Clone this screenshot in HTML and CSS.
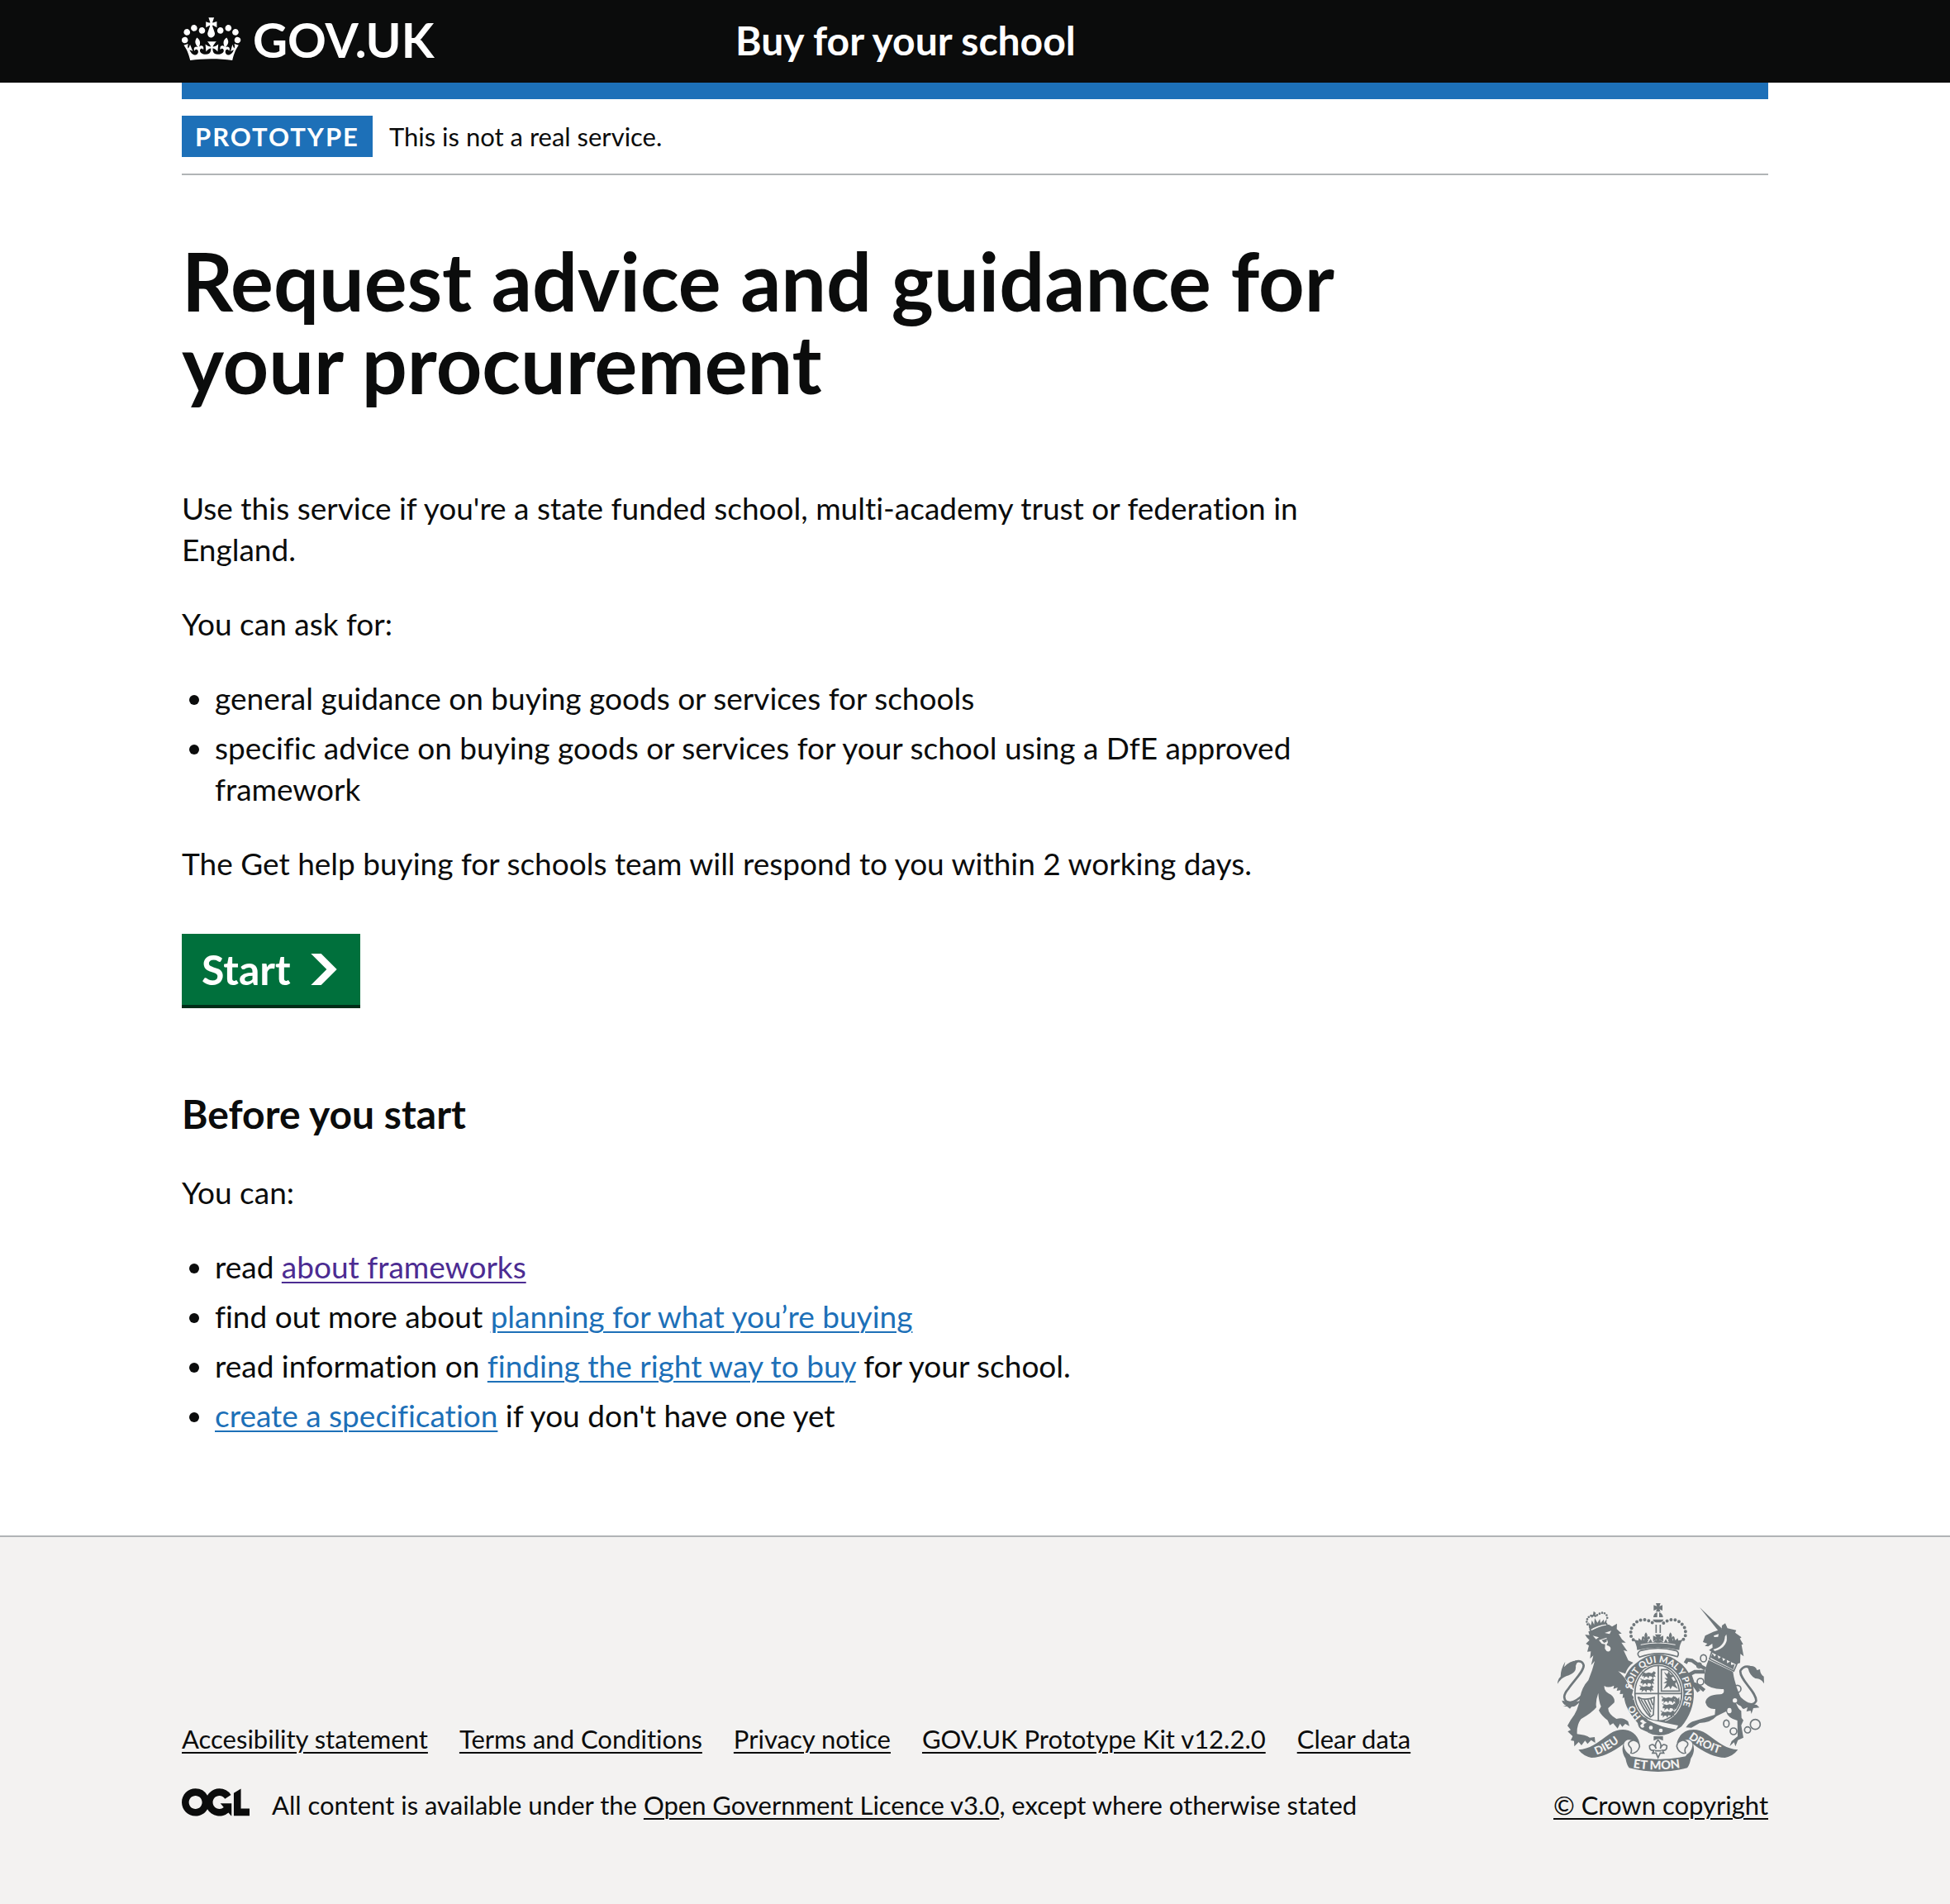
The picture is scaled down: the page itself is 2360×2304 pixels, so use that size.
FILE: index.html
```html
<!DOCTYPE html>
<html lang="en">
<head>
<meta charset="utf-8">
<meta name="viewport" content="width=device-width, initial-scale=1">
<title>Request advice and guidance for your procurement - Buy for your school</title>
<link rel="stylesheet" href="styles.css">
</head>
<body>
<header class="header">
  <div class="container header-row">
    <a class="logo" href="#">
      <svg class="logo-crown" viewBox="0 4 36 27" aria-hidden="true"><path fill="currentColor" d="M6.7 12.2c1 .4 2.1-.1 2.5-1s-.1-2.1-1-2.5c-1-.4-2.1.1-2.5 1-.4 1 0 2.1 1 2.5m-4.3 2.5c1 .4 2.1-.1 2.5-1s-.1-2.1-1-2.5c-1-.4-2.1.1-2.5 1-.5 1 0 2.1 1 2.5m-1.3 4.8c1 .4 2.1-.1 2.5-1 .4-1-.1-2.1-1-2.5-1-.4-2.1.1-2.5 1-.4 1 0 2.1 1 2.5m10.4-5.8c1 .4 2.1-.1 2.5-1s-.1-2.1-1-2.5c-1-.4-2.1.1-2.5 1s0 2.1 1 2.5m17.4-1.5c-1 .4-2.1-.1-2.5-1s.1-2.1 1-2.5c1-.4 2.1.1 2.5 1 .5 1 0 2.1-1 2.5m4.3 2.5c-1 .4-2.1-.1-2.5-1s.1-2.1 1-2.5c1-.4 2.1.1 2.5 1 .5 1 0 2.1-1 2.5m1.3 4.8c-1 .4-2.1-.1-2.5-1-.4-1 .1-2.1 1-2.5 1-.4 2.1.1 2.5 1 .4 1 0 2.1-1 2.5m-10.4-5.8c-1 .4-2.1-.1-2.5-1s.1-2.1 1-2.5c1-.4 2.1.1 2.5 1s0 2.1-1 2.5m-5.3-4.9 2.4 1.3V6.5l-2.4.8c-.1-.1-.1-.2-.2-.2s1-3 1-3h-3.4l1 3c-.1.1-.2.1-.2.2-.1.1-2.4-.7-2.4-.7v3.5L17 8.8c-.1.1 0 .2.1.3l-1.4 4.2c-.1.2-.1.4-.1.7 0 1.1.8 2.1 1.9 2.2h.6C19.2 16 20 15.1 20 14c0-.2 0-.4-.1-.7l-1.4-4.2c.2-.1.3-.2.3-.3m-1 20.3c4.6 0 8.9.3 12.8.9 1.1-4.6 2.4-7.2 3.8-9.1l-2.6-.9c.3 1.3.3 1.9 0 2.8-.4-.4-.8-1.2-1.1-2.4l-1.2 4.2c.8-.5 1.4-.9 2-.9-1.2 2.6-2.7 3.2-3.6 3-1.2-.2-1.7-1.3-1.5-2.2.3-1.3 1.6-1.6 2.2-.1 1.2-2.4-.8-3.1-2.1-2.4 1.9-1.9 2.2-3.6.6-5.7-2.2 1.7-2.2 3.3-1.2 5.6-1.3-1.5-3.3-.7-2.5 1.7.9-1.4 2.1-.5 2 .8-.2 1.2-1.7 2.1-3.7 2-2.8-.2-3-2.2-3-3.7.7-.1 1.9.5 3 2l.4-4.4c-1.1 1.1-2.2 1.4-3.3 1.4.4-1.2 2.1-3.1 2.1-3.1h-5.4s1.7 1.9 2.1 3.1c-1.1 0-2.2-.3-3.3-1.4l.4 4.4c1.1-1.5 2.3-2.1 3-2-.1 1.6-.2 3.5-3 3.7-1.9.2-3.5-.8-3.7-2-.2-1.3 1.1-2.2 2-.8.7-2.4-1.3-3.1-2.6-1.7 1-2.3 1-4-1.2-5.6-1.6 2.1-1.3 3.8.6 5.7-1.3-.7-3.2 0-2.1 2.4.6-1.5 1.9-1.1 2.2.1.2.9-.4 1.9-1.5 2.2-1 .2-2.5-.5-3.7-3 .7 0 1.3.4 2 .9L5 20.4c-.3 1.2-.7 1.9-1.2 2.4-.3-.8-.2-1.5 0-2.8l-2.6.9C2.7 22.8 4 25.4 5.1 30c3.8-.5 8.2-.9 12.7-.9"/></svg>
      <span>GOV.UK</span>
    </a>
    <a class="service-name" href="#">Buy for your school</a>
  </div>
</header>

<div class="container content">
  <div class="phase-banner">
    <strong class="tag">PROTOTYPE</strong>
    <span>This is not a real service.</span>
  </div>

  <main class="main">
    <h1>Request advice and guidance for your procurement</h1>
    <p>Use this service if you're a state funded school, multi-academy trust or federation in England.</p>
    <p>You can ask for:</p>
    <ul class="bullets">
      <li>general guidance on buying goods or services for schools</li>
      <li>specific advice on buying goods or services for your school using a DfE approved framework</li>
    </ul>
    <p>The Get help buying for schools team will respond to you within 2 working days.</p>
    <button class="start" type="button">Start
      <svg class="start-icon" viewBox="0 0 33 40" aria-hidden="true"><path fill="currentColor" d="M0 0h13l20 20-20 20H0l20-20z"/></svg>
    </button>
    <h2>Before you start</h2>
    <p>You can:</p>
    <ul class="bullets">
      <li>read <a class="visited" href="#">about frameworks</a></li>
      <li>find out more about <a href="#">planning for what you’re buying</a></li>
      <li>read information on <a href="#">finding the right way to buy</a> for your school.</li>
      <li><a href="#">create a specification</a> if you don't have one yet</li>
    </ul>
  </main>
</div>

<footer class="footer">
  <div class="container footer-row">
    <div class="footer-main">
      <ul class="footer-links">
        <li><a href="#">Accesibility statement</a></li>
        <li><a href="#">Terms and Conditions</a></li>
        <li><a href="#">Privacy notice</a></li>
        <li><a href="#">GOV.UK Prototype Kit v12.2.0</a></li>
        <li><a href="#">Clear data</a></li>
      </ul>
      <div class="licence">
        <svg class="ogl" viewBox="0 0 483 196" aria-hidden="true"><path fill="currentColor" d="M421.5 142.8V.1l-50.7 32.3v161.1h112.4v-50.7zm-122.3-9.6A47.12 47.12 0 0 1 221 97.8c0-26 21.1-47.1 47.1-47.1 16.7 0 31.4 8.7 39.7 21.8l42.7-27.2A97.63 97.63 0 0 0 268.1 0c-36.5 0-68.3 20.1-85.1 49.7A98 98 0 0 0 97.8 0C43.9 0 0 43.9 0 97.8s43.9 97.8 97.8 97.8c36.5 0 68.3-20.1 85.1-49.7a97.76 97.76 0 0 0 149.6 25.4l19.4 22.2h3v-87.8h-80l24.3 27.5zM97.8 145c-26 0-47.1-21.1-47.1-47.1s21.1-47.1 47.1-47.1 47.1 21.1 47.1 47.1S123.8 145 97.8 145"/></svg>
        <span>All content is available under the <a href="#">Open Government Licence v3.0</a>, except where otherwise stated</span>
      </div>
    </div>
    <a class="copyright" href="#">
      <svg class="arms" viewBox="72 60 750 612" aria-hidden="true">
        <defs>
          <path id="belt" d="M376 472A97 111 0 1 1 486 483"/>
          <path id="ribbon-left" d="M214 611Q268 590 318 546"/>
          <path id="ribbon-right" d="M547 550Q604 592 682 612"/>
          <path id="ribbon-mid" d="M346 657Q437 672 532 655"/>
          <g id="fleur"><path d="M0-16Q-9-5-3 4Q-12-8-15 4Q-13 12-7 8L-9 16H9L7 8Q13 12 15 4Q12-8 3 4Q9-5 0-16Z"/></g>
          <g id="lion-passant"><path d="M-26 2l6-9 8 3 10-3 11 3 8-7 7 6-5 7 5 8-8-2-2 8-5-8-9-1-3 9-5-8-6 1-6 7 1-9-7 1zM-24-4l-5-7 8 3z"/></g>
        </defs>
        <!-- lion -->
        <path d="M178 184L172 174L188 176L184 163L258 137L270 145L288 134L287 154L305 170L294 172L306 191L320 203L304 203L326 235L312 231L329 268L347 276Q326 291 318 316L292 307Q327 337 330 364L347 376L342 393L350 403L339 417L332 405L323 416L316 402L308 404L310 389L298 390L301 376L287 378L290 366L275 371L277 359Q255 370 242 360Q239 381 266 392Q282 405 278 421L256 441Q255 461 286 480Q310 472 328 489L333 506L318 498L307 509L299 497L290 515L274 496L262 503L254 485Q231 468 222 449L230 435Q222 417 220 386Q209 417 213 438Q199 456 157 481Q141 503 143 535Q174 538 189 548L207 546L209 567L194 557L181 571L172 559L159 576L149 564L133 580L132 560L120 558L127 543L109 526L120 520L108 505L120 484Q148 449 153 404Q161 364 184 340Q199 304 207 270L194 285L202 250L190 261L193 235L180 236L186 214L175 207L188 194Z"/>
        <path class="line-thick" d="M168 389Q128 431 103 416Q87 399 111 371C132 340 168 307 167 286Q163 265 136 272"/>
        <path d="M150 269Q119 265 96 292L100 272Q83 299 83 327Q73 334 72 353Q87 328 113 322Q142 311 138 288Q141 276 150 269ZM88 413Q91 427 104 431L92 435L107 435L117 443L123 436Q139 437 156 414L120 420Z"/>
        <path class="paper" d="M200 178L222 184L212 191ZM243 168L267 160L261 172ZM222 194L250 185L255 202L250 212Q269 216 264 231Q253 243 244 225L245 209L233 207Z"/>
        <path d="M232 194L252 188L250 200L241 204Z"/>
        <!-- lion's crown -->
        <path class="line" d="M190 155Q215 137 250 134L253 142Q219 147 195 164Z"/>
        <path d="M186 149L184 128L193 141L197 122L205 138L207 114L217 131L226 117L228 132L240 119L241 131L251 116L249 134Q215 137 190 155Z"/>
        <path d="M203 89l8 6-2 8 8 1-7 7-7-4-6 6-4-9 8-3z"/>
        <g class="dots"><path d="M181 137L177 124L183 112L192 105L203 108M216 103L228 96L240 94L250 103L253 115"/></g>
        <!-- unicorn -->
        <path d="M588 75L670 153L657 162Z"/>
        <path d="M600 201L608 178L637 164L668 154L669 141L681 133L689 151L721 158L717 167L740 184L734 188L746 209L740 211L748 253L736 244L735 277L721 281L632 237L622 230L635 221L634 207L619 217L607 215L616 207Z"/>
        <path class="paper" d="M639 178L657 172L655 182L641 183ZM685 173Q696 217 643 234L637 228Q678 218 680 181Z"/>
        <path class="paper line" d="M632 236L723 281L712 306L624 263Z"/>
        <path d="M628 258L635 242L642 254L651 243L657 262L669 252L673 270L686 261L688 278L702 269L702 284L715 282L710 301Z"/>
        <path d="M620 266L709 309Q715 352 734 395Q749 426 773 437L756 437Q736 437 720 422Q727 443 739 451L740 476L747 485L739 503L747 548L727 557L718 580L713 565L697 579L704 561L726 543L725 486Q691 478 684 453L649 470Q629 493 588 495L558 512L538 511Q550 491 572 487L643 465L645 444Q617 447 609 420Q613 392 662 391Q680 390 675 372Q630 374 606 351Q601 309 620 266Z"/>
        <path class="line-leg" d="M609 298L577 280L560 268L543 266L536 278M606 309L570 309L552 318L563 350L588 363L605 377M566 354L585 380"/>
        <path class="line-thick" d="M735 405Q778 443 793 415C796 382 731 337 736 305Q749 283 776 293"/>
        <path d="M755 291Q790 281 796 303L807 300Q808 319 821 326L822 352Q812 333 790 333Q770 323 764 297ZM735 418Q737 442 748 444L762 438L758 453L773 450L776 462L783 441L805 439L795 429Z"/>
        <g class="chain"><ellipse cx="602" cy="260" rx="11" ry="13"/><ellipse cx="586" cy="286" rx="8" ry="9"/><circle cx="591" cy="345" r="12"/><circle cx="725" cy="371" r="13"/><ellipse cx="685" cy="497" rx="10" ry="13"/><circle cx="711" cy="525" r="12"/><circle cx="762" cy="520" r="11"/><circle cx="790" cy="500" r="18"/></g>
        <circle class="paper" cx="716" cy="413" r="8"/><ellipse class="paper" cx="696" cy="450" rx="8" ry="10"/>
        <!-- garter and shield -->
        <path d="M353 281Q437 208 525 283Q567 326 567 387Q567 453 522 508Q430 575 370 503Q316 444 314 400L349 410L348 371L316 330Q330 298 353 281Z"/>
        <ellipse class="paper" cx="438" cy="387" rx="91" ry="106"/>
        <ellipse class="line" cx="438" cy="387" rx="85" ry="101"/>
        <path class="line-cross" d="M438 286V490M353 388H523"/>
        <g><use href="#lion-passant" x="405" y="318"/><use href="#lion-passant" x="400" y="343"/><use href="#lion-passant" x="397" y="368"/><use href="#lion-passant" x="477" y="408"/><use href="#lion-passant" x="480" y="434"/><use href="#lion-passant" x="474" y="460"/></g>
        <path class="line" d="M449 301H470Q506 325 515 379H449Z"/>
        <path d="M458 309L470 318L476 308L482 319L497 325L485 330L493 342L507 339L499 353L509 371L489 360L482 373L477 361L457 372L469 350L456 350L470 341L460 331L472 333Z"/>
        <path class="line" d="M364 400Q385 416 423 402L420 465L409 473Q384 449 364 400M375 409L409 466M387 411L411 455M400 410L415 445M410 407L418 430"/>
        <path d="M498 398L509 407 514 400 515 420 505 440 495 450 499 425ZM418 485H460L471 494H408Z"/>
        <!-- buckle and belt end -->
        <path class="paper" d="M380 478L510 504L501 521Q437 548 370 516Z"/>
        <path d="M397 483Q448 512 505 518Q450 555 374 517Q358 503 367 480Q386 467 400 483Z"/>
        <path class="paper" d="M382 483Q371 483 373 491L381 495L372 504Q376 517 387 509Q380 497 396 494L388 489Z"/>
        <circle class="paper" cx="411" cy="512" r="7"/><circle class="paper" cx="447" cy="522" r="7"/>
        <text class="motto motto-belt"><textPath href="#belt">HO<tspan dx="56">SOIT QUI MAL Y PENSE</tspan></textPath></text>
        <!-- royal crown -->
        <path class="paper line" d="M373 232Q437 215 502 232Q517 240 507 254Q437 230 370 256Q356 243 373 232Z"/>
        <path d="M361 230Q359 205 347 191L365 196L367 187L376 195L380 184L386 198L394 190L401 203L410 190L417 203L428 194H447L458 203L465 190L473 203L481 190L489 198L495 184L500 195L508 187L511 196L528 191Q515 208 514 230Q437 212 361 230Z"/>
        <path class="line-thin paper-stroke" d="M374 211Q437 197 500 211"/>
        <use href="#fleur" x="393" y="182"/><use href="#fleur" x="482" y="182"/>
        <path d="M426 173H449L444 183L456 178V199L442 192L445 203H429L433 192L419 199V178L431 183ZM418 119H457Q455 130 437 130Q420 130 418 119ZM420 111Q421 96 434 93V111ZM441 93Q454 97 455 111H441ZM429 60H446L442 71L453 67V87L442 82L446 91H429L433 82L421 87V67L433 71Z"/>
        <path class="line-cross" d="M430 138V168M445 138V168"/>
        <g class="pearls"><path d="M347 193L339 180L338 165L341 150L350 137L361 127L375 121L390 120L405 124L418 132M457 132L470 124L485 120L500 121L514 127L525 137L534 150L537 165L536 180L528 193"/></g>
        <!-- motto ribbon -->
        <path d="M148 592C188 590 215 568 262 534C302 508 357 515 370 568L340 557Q320 552 313 570Q248 620 195 621Q165 615 148 592Z"/>
        <path d="M727 592C687 590 660 568 613 534C573 508 518 515 505 568L535 557Q555 552 562 570Q627 620 680 621Q710 615 727 592Z"/>
        <path class="paper line" d="M347 557Q369 561 370 580Q364 604 337 607Q346 590 332 578Q324 564 347 557ZM528 557Q506 561 505 580Q511 604 538 607Q529 590 543 578Q551 564 528 557Z"/>
        <path d="M313 565Q311 588 325 602Q334 616 437 626Q541 616 550 602Q564 588 562 565Q575 596 556 624Q551 649 543 658Q437 686 332 658Q324 649 319 624Q300 596 313 565Z"/>
        <path class="paper" d="M330 604Q437 639 545 604L537 616Q437 637 338 616Z"/>
        <path d="M421 543H455V559L438 552L421 559Z"/>
        <path class="line paper" d="M437 556Q422 575 430 588Q421 565 406 578Q405 597 422 594L417 604H430L437 621L445 604H458L453 594Q470 597 469 578Q454 565 445 588Q453 575 437 556ZM426 596H449"/>
        <text class="motto"><textPath href="#ribbon-left">DIEU</textPath></text>
        <text class="motto"><textPath href="#ribbon-right">DROIT</textPath></text>
        <text class="motto motto-mid"><textPath href="#ribbon-mid">ET MON</textPath></text>
      </svg>
      <span>© Crown copyright</span>
    </a>
  </div>
</footer>
</body>
</html>
```
FILE: styles.css
```css
:root {
  --ink: #0b0c0c;
  --blue: #1d70b8;
  --rule: #b1b4b6;
  --panel: #f3f2f1;
  --arms: #6f777b;
}

* { box-sizing: border-box; }

body {
  display: flex;
  flex-direction: column;
  min-height: 100vh;
  margin: 0;
  background: #fff;
  color: var(--ink);
  font-family: Lato, "Open Sans", sans-serif;
  font-size: 37px;
  font-variant-ligatures: no-common-ligatures;
  line-height: 50px;
}

a {
  color: var(--blue);
  text-decoration-thickness: 2px;
  text-underline-offset: 4px;
}
a.visited { color: #4c2c92; }

p { margin: 0 0 40px; }

.container {
  width: calc(100% - 60px);
  max-width: 1920px;
  margin: 0 auto;
}

/* Header */
.header { background: var(--ink); color: #fff; }
.header a { color: inherit; text-decoration: none; font-weight: 700; }
.header-row {
  display: grid;
  grid-template-columns: 1fr 2fr;
  align-items: center;
  min-height: 100px;
}
.logo {
  display: flex;
  align-items: center;
  gap: 14px;
  padding-bottom: 4px;
  font-size: 58px;
  line-height: 60px;
}
.logo-crown { width: 72px; height: 54px; }
.service-name { padding: 0 0 2px 30px; font-size: 48px; }

/* Phase banner */
.content { border-top: 20px solid var(--blue); }
.phase-banner {
  display: flex;
  align-items: center;
  gap: 20px;
  padding: 20px 0;
  border-bottom: 2px solid var(--rule);
  font-size: 31px;
}
.tag {
  padding: 0 16px;
  background: var(--blue);
  color: #fff;
  letter-spacing: 2px;
}

/* Content */
.main { max-width: 1425px; padding: 78px 0 80px; }
h1 {
  margin: 0 0 100px;
  font-size: 97px;
  line-height: 100px;
}
h2 {
  margin: 0 0 40px;
  font-size: 48px;
  line-height: 60px;
}
.bullets { margin: 0 0 40px; padding-left: 40px; }
.bullets li + li { margin-top: 10px; }

.start {
  display: flex;
  align-items: center;
  gap: 24px;
  margin: 60px 0 98px;
  padding: 14px 28px 18px 24px;
  border: 0;
  background: #00703c;
  box-shadow: inset 0 -4px 0 #002d18;
  color: #fff;
  font: 700 50px/58px Lato, "Open Sans", sans-serif;
}
.start-icon { width: 32px; height: 38px; }

/* Footer */
.footer {
  flex: 1 0 auto;
  padding: 80px 0 100px;
  border-top: 2px solid var(--rule);
  background: var(--panel);
  font-size: 31px;
  line-height: 40px;
}
.footer a { color: inherit; }
.footer-row {
  display: flex;
  align-items: flex-end;
  justify-content: space-between;
  gap: 60px;
}
.footer-links {
  display: flex;
  flex-wrap: wrap;
  gap: 20px 38px;
  margin: 0 0 40px;
  padding: 0;
  list-style: none;
}
.licence { display: flex; align-items: flex-start; gap: 27px; }
.ogl { flex: none; width: 82px; height: 34px; }
.copyright {
  display: flex;
  flex-direction: column;
  align-items: center;
  gap: 20px;
}

/* Royal arms */
.arms { width: 250px; height: 204px; fill: var(--arms); }
.arms .paper { fill: var(--panel); }
.arms .line { stroke: var(--arms); stroke-width: 5; }
.arms .line:not(.paper),
.arms .line-thin,
.arms .line-thick,
.arms .line-cross,
.arms .line-leg,
.arms .chain,
.arms .dots,
.arms .pearls { fill: none; stroke: var(--arms); }
.arms .line-thick { stroke-width: 8; }
.arms .line-cross { stroke-width: 5; }
.arms .line-leg { stroke-width: 13; }
.arms .line-thin { stroke-width: 3; }
.arms .paper-stroke { stroke: var(--panel); }
.arms .chain { stroke-width: 5; }
.arms .dots { stroke-width: 8; stroke-linecap: round; stroke-dasharray: 0 10; }
.arms .pearls { stroke-width: 12; stroke-linecap: round; stroke-dasharray: 0 15; }
.arms .motto {
  fill: var(--panel);
  font: 900 40px Lato, "Open Sans", sans-serif;
}
.arms .motto-mid { font-size: 44px; }
.arms .motto-belt { font-size: 33px; }
```
